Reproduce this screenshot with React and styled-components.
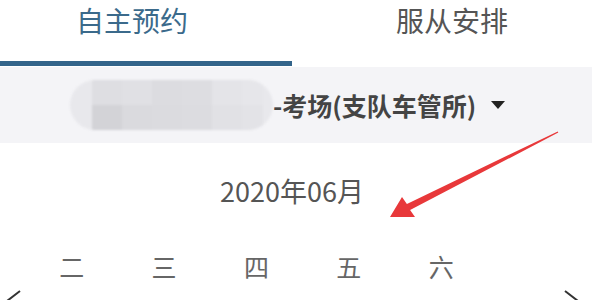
import React from "react";
import styled, { createGlobalStyle } from "styled-components";

const Global = createGlobalStyle`
  html, body { margin: 0; padding: 0; background: #fff; overflow: hidden; }
  * { box-sizing: border-box; }
  body { font-family: "Noto Sans CJK SC", "Noto Sans", sans-serif; }
`;

const Page = styled.div`
  position: relative;
  width: 600px;
  height: 300px;
  overflow: hidden;
  background: #fff;
`;

const TabBar = styled.div`
  display: grid;
  grid-template-columns: 292px 1fr;
`;

const Tab = styled.div`
  height: 66px;
  line-height: 41px;
  font-size: 28px;
  text-align: center;
  white-space: nowrap;
  padding: ${(p) => (p.$active ? "0 28px 0 0" : "0 0 0 12px")};
  color: ${(p) => (p.$active ? "#3b6a8b" : "#555")};
  border-bottom: 5px solid ${(p) => (p.$active ? "#33648a" : "transparent")};
`;

const Selector = styled.div`
  margin-top: 1px;
  width: 592px;
  height: 76px;
  background: #f4f4f7;
  display: flex;
  align-items: center;
  padding-left: 70px;
`;

const Blur = styled.div`
  width: 203px;
  height: 50px;
  border-radius: 25px;
  background: #e8e8ec;
  overflow: hidden;
  display: flex;
  padding-left: 22px;
  filter: blur(1.2px);
`;

const Mosaic = styled.div`
  display: grid;
  grid-template-columns: repeat(4, 30px) 30px 21px;
  grid-template-rows: 25px 25px;
`;

const Cell = styled.div`
  background: ${(p) => p.$shade};
`;

const Label = styled.span`
  font-size: 25px;
  font-weight: 700;
  color: #444;
  line-height: 1;
`;

const Caret = styled.span`
  margin-left: 15px;
  width: 0;
  height: 0;
  border-left: 7px solid transparent;
  border-right: 7px solid transparent;
  border-top: 8px solid #222;
`;

const Calendar = styled.div`
  width: 584px;
`;

const MonthTitle = styled.div`
  margin-top: 28px;
  text-align: center;
  font-size: 27px;
  line-height: 40px;
  color: #555;
`;

const WeekRow = styled.div`
  margin-top: 40px;
  display: grid;
  grid-template-columns: repeat(5, 92.4px);
  padding-left: 25.5px;
  font-size: 25px;
  line-height: 30px;
  color: #666;
`;

const WeekDay = styled.div`
  text-align: center;
`;

const NavRow = styled.div`
  margin-top: 9px;
  display: flex;
  justify-content: space-between;
  padding: 0 4px 0 6px;
`;

const Chevron = styled.svg`
  display: block;
  width: 16px;
  height: 24px;
`;

const Overlay = styled.svg`
  position: absolute;
  left: 0;
  top: 0;
  width: 600px;
  height: 300px;
  pointer-events: none;
`;

const shades = [
  "#dedee2", "#e0e0e4", "#dcdce0", "#dddde1", "#e4e4e8", "#e6e6ea",
  "#d3d3d7", "#dadade", "#dbdbdf", "#dcdce0", "#e1e1e5", "#e3e3e7",
];

const days = ["二", "三", "四", "五", "六"];

export default function App() {
  return (
    <>
      <Global />
      <Page>
        <TabBar>
          <Tab $active>自主预约</Tab>
          <Tab>服从安排</Tab>
        </TabBar>
        <Selector>
          <Blur>
            <Mosaic>
              {shades.map((s, i) => (
                <Cell key={i} $shade={s} />
              ))}
            </Mosaic>
          </Blur>
          <Label>-考场(支队车管所)</Label>
          <Caret />
        </Selector>
        <Calendar>
          <MonthTitle>2020年06月</MonthTitle>
          <WeekRow>
            {days.map((d) => (
              <WeekDay key={d}>{d}</WeekDay>
            ))}
          </WeekRow>
          <NavRow>
            <Chevron viewBox="0 0 16 24">
              <polyline points="14,1 1,11 14,21" fill="none" stroke="#333" strokeWidth="2" />
            </Chevron>
            <Chevron viewBox="0 0 16 24">
              <polyline points="1,1 14,11 1,21" fill="none" stroke="#333" strokeWidth="2" />
            </Chevron>
          </NavRow>
        </Calendar>
        <Overlay viewBox="0 0 600 300">
          <polygon
            points="390,217 415,217 410.1,210.1 558.3,132.6 557.7,131.4 406.9,203.9 402,197"
            fill="#e8383a"
          />
        </Overlay>
      </Page>
    </>
  );
}
